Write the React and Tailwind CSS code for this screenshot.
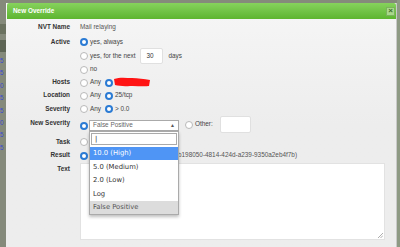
import React from "react";

const Radio = ({ checked }) =>
  checked ? (
    <span className="inline-block w-[8px] h-[8px] rounded-full border-[2.5px] border-[#2b7bd4] bg-white shrink-0" />
  ) : (
    <span className="inline-block w-[8px] h-[8px] rounded-full border border-[#b9b9b9] bg-white shrink-0" />
  );

function Row({ label, h, children }) {
  return (
    <div className={`flex items-center ${h}`}>
      <div className="w-[64px] shrink-0 text-right font-bold text-[#333]">{label}</div>
      <div className="ml-[10px] flex items-center gap-[2px] text-[#444]">{children}</div>
    </div>
  );
}

export default function App() {
  return (
    <div
      className="w-[400px] h-[247px] overflow-hidden bg-[#858a7b] flex text-[6.4px] leading-none"
      style={{ fontFamily: '"Liberation Sans", Arial, sans-serif' }}
    >
      <div className="w-[6px] shrink-0 flex flex-col gap-[6px] pt-[24px] text-[#3b4bd0]">
        <span className="h-[10px] bg-[#6b7260]" />
        <span className="h-[12px] bg-[#5e6555]" />
        <span>5</span>
        <span>5</span>
        <span>0</span>
        <span>5</span>
        <span>5</span>
        <span>0</span>
        <span>5</span>
        <span>5</span>
      </div>
      <div className="mt-[3px] w-[391px] h-[244px] bg-gradient-to-b from-[#f6f6f6] via-[#ededed] to-[#ededed] border-r border-[#c9c9c9] flex flex-col">
        <div className="ml-[1px] h-[16px] bg-gradient-to-b from-[#86d25c] to-[#5db52f] rounded-t-[2px] flex items-center justify-between pl-[6px] pr-[1px]">
          <span className="font-bold text-white">New Override</span>
          <span className="w-[9px] h-[9px] bg-[#a9d88c] border border-[#7bb35b] flex items-center justify-center text-[#3d6a28] text-[8px] font-bold leading-none">
            ×
          </span>
        </div>

        <div className="h-[1px]" />
        <Row label="NVT Name" h="h-[15px]">
          <span className="text-[#555]">Mail relaying</span>
        </Row>
        <Row label="Active" h="h-[14px]">
          <Radio checked />
          <span>yes, always</span>
        </Row>
        <Row label="" h="h-[14px]">
          <Radio />
          <span>yes, for the next</span>
          <span className="ml-[3px] w-[23px] h-[16px] bg-white rounded-[2px] border border-[#e0e0e0] flex items-center pl-[5px] text-[#333]">
            30
          </span>
          <span className="ml-[3px]">days</span>
        </Row>
        <Row label="" h="h-[13px]">
          <Radio />
          <span>no</span>
        </Row>
        <Row label="Hosts" h="h-[13px]">
          <Radio />
          <span className="w-[13px]">Any</span>
          <Radio checked />
          <svg width="36" height="10" viewBox="0 0 36 10" className="ml-[-1px] shrink-0 -mt-[2px]">
            <path
              d="M0 2 C6 0 12 1 18 1 C24 1 30 2 36 3 L35 9 C28 10 22 8.5 16 9 C10 9.5 5 9 1 8 Z"
              fill="#ff1414"
            />
          </svg>
        </Row>
        <Row label="Location" h="h-[13px]">
          <Radio />
          <span className="w-[13px]">Any</span>
          <Radio checked />
          <span>25/tcp</span>
        </Row>
        <Row label="Severity" h="h-[14px]">
          <Radio />
          <span className="w-[13px]">Any</span>
          <Radio checked />
          <span>&gt; 0.0</span>
        </Row>
        <div className="flex items-start h-[19px]">
          <div className="w-[64px] shrink-0 text-right font-bold text-[#333] pt-[4px]">New Severity</div>
          <div className="ml-[10px] mt-[6px]">
            <Radio checked />
          </div>
          <div className="relative ml-[1px] mt-[4px]">
            <div className="w-[90px] h-[11px] bg-white border border-[#aaa] flex items-center justify-between px-[3px] text-[#666]">
              <span>False Positive</span>
              <span className="text-[5px] text-[#555]">▲</span>
            </div>
            <div
              className="absolute left-0 top-[11px] w-[90px] bg-white border border-[#aaa] shadow-[0_2px_3px_rgba(0,0,0,0.25)] z-10 text-[6.8px] text-[#333]"
              style={{ fontFamily: '"DejaVu Sans", sans-serif' }}
            >
              <div className="px-[1px] pt-[1px] pb-[2px]">
                <div className="h-[12px] border border-[#aaa] flex items-center pl-[3px] text-[#222]">|</div>
              </div>
              <div className="h-[13px] bg-[#4f95f5] text-white flex items-center pl-[3px]">10.0 (High)</div>
              <div className="h-[14px] flex items-center pl-[3px]">5.0 (Medium)</div>
              <div className="h-[13px] flex items-center pl-[3px]">2.0 (Low)</div>
              <div className="h-[14px] flex items-center pl-[3px]">Log</div>
              <div className="h-[13px] bg-[#dcdcdc] flex items-center pl-[3px] text-[#555]">False Positive</div>
            </div>
          </div>
          <div className="ml-[6px] flex items-center gap-[2px] text-[#444]">
            <Radio />
            <span>Other:</span>
            <span className="ml-[5px] w-[31px] h-[17px] bg-white rounded-[2px] border border-[#e0e0e0]" />
          </div>
        </div>
        <Row label="Task" h="h-[14px]">
          <Radio />
        </Row>
        <Row label="Result" h="h-[13px]">
          <Radio checked />
          <span className="w-[86px]" />
          <span className="text-[#555]">b198050-4814-424d-a239-9350a2eb4f7b)</span>
        </Row>
        <div className="flex items-start mt-[1px]">
          <div className="w-[64px] shrink-0 text-right font-bold text-[#333] pt-[3px]">Text</div>
          <div className="ml-[10px] relative w-[305px] h-[77px] bg-white border border-[#e2e2e2]">
            <svg className="absolute right-[1px] bottom-[1px]" width="5" height="5" viewBox="0 0 5 5">
              <path d="M5 0 L0 5 M5 2.5 L2.5 5" stroke="#999" strokeWidth="0.8" />
            </svg>
          </div>
        </div>
      </div>
      <div className="flex-1 bg-[#8e9a84]" />
    </div>
  );
}
